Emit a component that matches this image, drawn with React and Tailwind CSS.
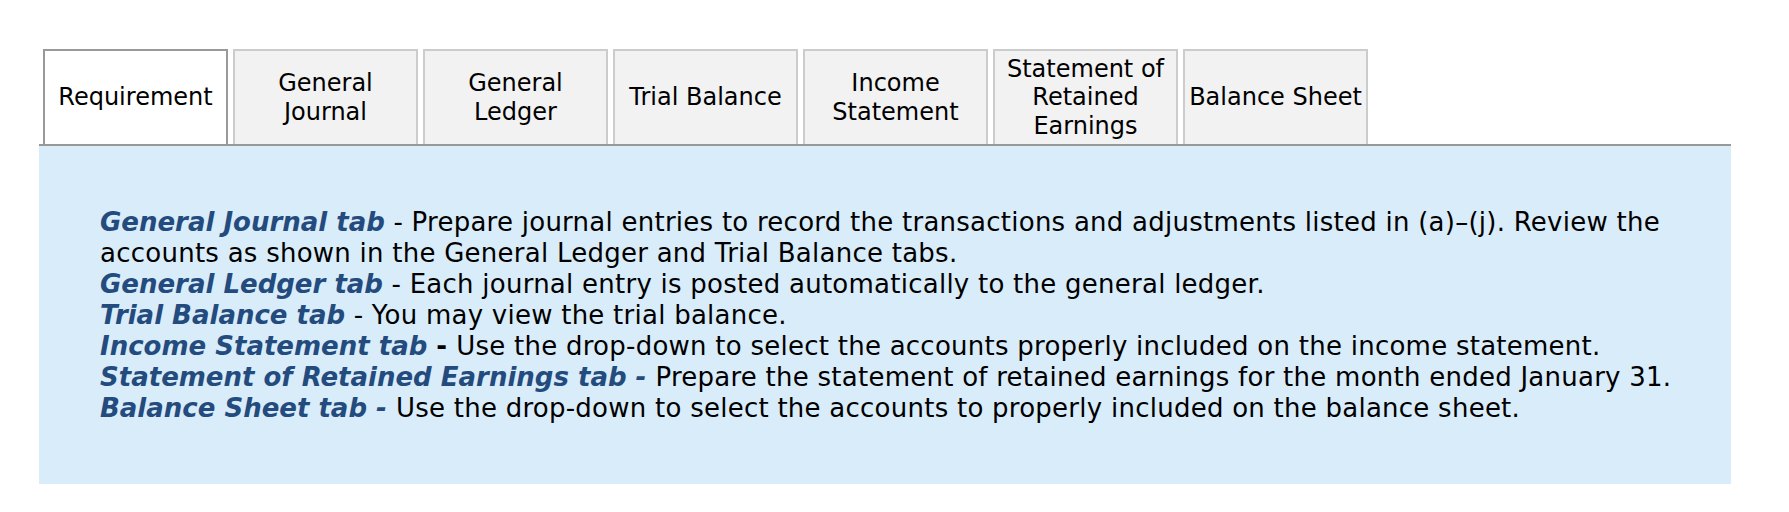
const tabs = [
  ["Requirement"],
  ["General", "Journal"],
  ["General", "Ledger"],
  ["Trial Balance"],
  ["Income", "Statement"],
  ["Statement of", "Retained", "Earnings"],
  ["Balance Sheet"],
]

const items = [
  {
    label: "General Journal tab",
    dash: "plain",
    text: (
      <>
        Prepare journal entries to record the transactions and adjustments listed in (a)–(j). Review the
        <br />
        accounts as shown in the General Ledger and Trial Balance tabs.
      </>
    ),
  },
  { label: "General Ledger tab", dash: "plain", text: "Each journal entry is posted automatically to the general ledger." },
  { label: "Trial Balance tab", dash: "plain", text: "You may view the trial balance." },
  { label: "Income Statement tab", dash: "bold", text: "Use the drop-down to select the accounts properly included on the income statement." },
  { label: "Statement of Retained Earnings tab", dash: "blue", text: "Prepare the statement of retained earnings for the month ended January 31." },
  { label: "Balance Sheet tab", dash: "blue", text: "Use the drop-down to select the accounts to properly included on the balance sheet." },
]

function Tab({ lines, active }) {
  return (
    <div
      className={`flex h-[95px] w-[185px] flex-col items-center justify-center border-2 border-b-0 text-center text-[24px] leading-[28.5px] text-black ${
        active ? "border-[#999999] bg-white" : "border-[#cccccc] bg-[#f2f2f2]"
      }`}
    >
      {lines.map((l) => (
        <span key={l} className="whitespace-nowrap">{l}</span>
      ))}
    </div>
  )
}

export default function App() {
  return (
    <div className="min-h-screen bg-white pt-[49px] font-['DejaVu_Sans',Verdana,sans-serif]">
      <div className="ml-[39px] w-[1692px]">
        {/* tabs */}
        <div className="flex gap-[5px] border-b-2 border-[#999999] pl-[4px]">
          {tabs.map((t, i) => (
            <Tab key={i} lines={t} active={i === 0} />
          ))}
        </div>

        {/* requirement panel */}
        <div className="bg-[#d9ecf9] px-[61px] pb-[60px] pt-[61px] text-[26px] leading-[31px] text-black">
          {items.map((it) => (
            <div key={it.label} className="whitespace-nowrap">
              <span className="font-bold italic text-[#234b7e]">{it.label}</span>
              {it.dash === "plain" && <span className="tracking-[0.25px]"> - </span>}
              {it.dash === "bold" && <span className="font-bold"> - </span>}
              {it.dash === "blue" && <span className="font-bold italic text-[#234b7e]"> - </span>}
              <span className="tracking-[0.25px]">{it.text}</span>
            </div>
          ))}
        </div>
      </div>
    </div>
  )
}
